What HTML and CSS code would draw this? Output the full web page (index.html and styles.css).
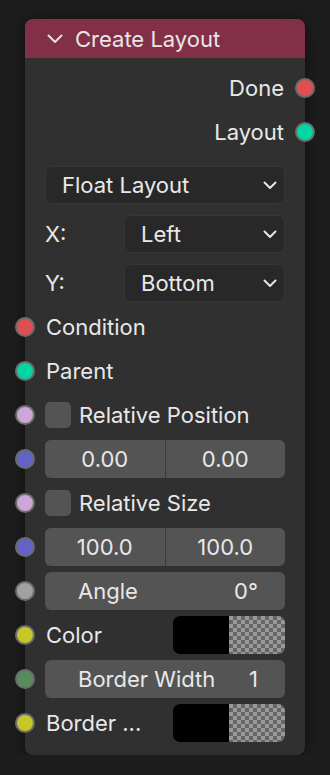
FILE: index.html
```html
<!doctype html>
<html lang="en">
  <head>
    <meta charset="UTF-8" />
    <meta name="viewport" content="width=device-width, initial-scale=1.0" />
    <title>Create Layout node</title>
    <link rel="stylesheet" href="styles.css">
  </head>
  <body>
    <div class="node">
      <div class="node-header">
        <svg class="collapse" width="16" height="10" viewBox="0 0 16 10">
          <polyline points="1.5,1.5 8,8 14.5,1.5" fill="none" stroke="#e6dfe2" stroke-width="2" stroke-linecap="round" stroke-linejoin="round" />
        </svg>
        <span>Create Layout</span>
      </div>

      <div class="node-body">
        <!-- outputs -->
        <div class="row output">
          <span>Done</span>
          <i class="socket out s-red"></i>
        </div>
        <div class="row output">
          <span>Layout</span>
          <i class="socket out s-teal"></i>
        </div>

        <!-- settings -->
        <div class="settings">
          <div class="select">
            <span>Float Layout</span>
            <svg class="chev" width="14" height="9" viewBox="0 0 14 9">
              <polyline points="1.5,1.5 7,7 12.5,1.5" fill="none" stroke="#e6e6e6" stroke-width="2" stroke-linecap="round" stroke-linejoin="round" />
            </svg>
          </div>
          <div class="row">
            <span class="prop-label">X:</span>
            <div class="select grow">
              <span>Left</span>
              <svg class="chev" width="14" height="9" viewBox="0 0 14 9">
                <polyline points="1.5,1.5 7,7 12.5,1.5" fill="none" stroke="#e6e6e6" stroke-width="2" stroke-linecap="round" stroke-linejoin="round" />
              </svg>
            </div>
          </div>
          <div class="row">
            <span class="prop-label">Y:</span>
            <div class="select grow">
              <span>Bottom</span>
              <svg class="chev" width="14" height="9" viewBox="0 0 14 9">
                <polyline points="1.5,1.5 7,7 12.5,1.5" fill="none" stroke="#e6e6e6" stroke-width="2" stroke-linecap="round" stroke-linejoin="round" />
              </svg>
            </div>
          </div>
        </div>

        <!-- inputs -->
        <div class="row">
          <i class="socket in s-red"></i>
          <span>Condition</span>
        </div>
        <div class="row">
          <i class="socket in s-teal"></i>
          <span>Parent</span>
        </div>
        <div class="row">
          <i class="socket in s-lilac"></i>
          <span class="checkbox"></span>
          <span>Relative Position</span>
        </div>
        <div class="row">
          <i class="socket in s-blue"></i>
          <div class="vector">
            <span>0.00</span>
            <span>0.00</span>
          </div>
        </div>
        <div class="row">
          <i class="socket in s-lilac"></i>
          <span class="checkbox"></span>
          <span>Relative Size</span>
        </div>
        <div class="row">
          <i class="socket in s-blue"></i>
          <div class="vector">
            <span>100.0</span>
            <span>100.0</span>
          </div>
        </div>
        <div class="row">
          <i class="socket in s-grey"></i>
          <div class="slider">
            <span>Angle</span>
            <span>0°</span>
          </div>
        </div>
        <div class="row">
          <i class="socket in s-yellow"></i>
          <span>Color</span>
          <div class="swatch"><span class="swatch-color"></span><span class="swatch-alpha"></span></div>
        </div>
        <div class="row">
          <i class="socket in s-green"></i>
          <div class="slider">
            <span>Border Width</span>
            <span>1</span>
          </div>
        </div>
        <div class="row">
          <i class="socket in s-yellow"></i>
          <span>Border ...</span>
          <div class="swatch"><span class="swatch-color"></span><span class="swatch-alpha"></span></div>
        </div>
      </div>
    </div>
  </body>
</html>
```

FILE: styles.css
```css
body {
  margin: 0;
  background-color: #1d1d1d;
  font-family: Inter, 'Noto Sans', 'Liberation Sans', sans-serif;
  font-size: 22px;
  color: #e8e8e8;
}

.node {
  width: 280px;
  margin: 19px 0 0 25px;
  padding-bottom: 13px;
  background-color: #303030;
  border-radius: 8px;
  box-shadow: 0 2px 14px rgba(0, 0, 0, 0.55);
}

.node-header {
  height: 39px;
  display: flex;
  align-items: center;
  gap: 12px;
  padding-left: 22px;
  background-color: #823048;
  border-radius: 8px 8px 0 0;
  color: #ebe4e6;
}

.node-body {
  display: flex;
  flex-direction: column;
  gap: 6px;
  padding: 11px 20px 0;
}

.row {
  position: relative;
  height: 38px;
  display: flex;
  align-items: center;
}

.output {
  justify-content: flex-end;
}

.row > span:not(.checkbox):not(.prop-label) {
  padding-left: 1px;
}

.output > span {
  padding-right: 1px;
}

/* sockets sit on the node edge */
.socket {
  position: absolute;
  top: 9px;
  width: 16px;
  height: 16px;
  border: 2px solid #6c6c6c;
  border-radius: 50%;
}
.socket.in {
  left: -30px;
}
.socket.out {
  right: -30px;
}

.s-red { background-color: #e04f4f; }
.s-teal { background-color: #00d6a3; }
.s-lilac { background-color: #cca6d6; }
.s-blue { background-color: #6363c7; }
.s-grey { background-color: #a1a1a1; }
.s-yellow { background-color: #c7c729; }
.s-green { background-color: #598c5c; }

.settings {
  display: flex;
  flex-direction: column;
  gap: 11px;
  margin: 9px 0 0;
}

.prop-label {
  width: 79px;
  flex-shrink: 0;
}

.select {
  box-sizing: border-box;
  height: 38px;
  display: flex;
  align-items: center;
  justify-content: space-between;
  padding: 0 7px 0 16px;
  background-color: #282828;
  border: 1px solid #363636;
  border-radius: 7px;
}
.select.grow {
  flex-grow: 1;
}

.checkbox {
  width: 26px;
  height: 26px;
  margin-right: 7px;
  background-color: #545454;
  border-radius: 5px;
}

.vector {
  flex-grow: 1;
  height: 38px;
  display: grid;
  grid-template-columns: 1fr 1fr;
  gap: 1px;
  background-color: #3c3c3c;
  border-radius: 6px;
  overflow: hidden;
}
.vector span {
  display: flex;
  align-items: center;
  justify-content: center;
  background-color: #545454;
}

.slider {
  flex-grow: 1;
  height: 38px;
  display: flex;
  align-items: center;
  justify-content: space-between;
  padding: 0 27px 0 33px;
  background-color: #545454;
  border-radius: 6px;
}

.swatch {
  width: 112px;
  height: 38px;
  margin-left: auto;
  display: grid;
  grid-template-columns: 1fr 1fr;
  border-radius: 7px;
  overflow: hidden;
}
.swatch-color {
  background-color: #000;
}
.swatch-alpha {
  background: repeating-conic-gradient(#666 0 25%, #999 0 50%) 0 0 / 8px 8px;
}
```
